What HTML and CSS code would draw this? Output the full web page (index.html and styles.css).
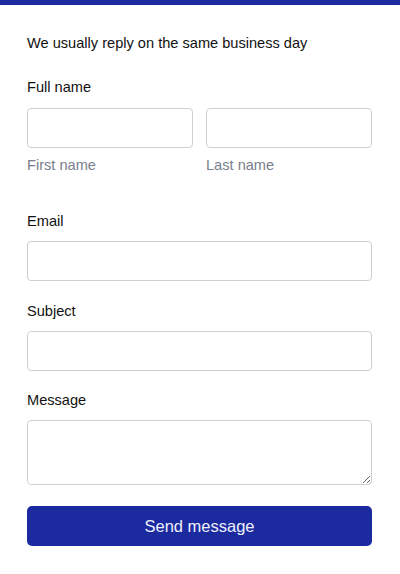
FILE: index.html
```html
<!DOCTYPE html>
<html>
<head>
<meta charset="utf-8">
<link rel="stylesheet" href="styles.css">
</head>
<body>
<div class="topbar"></div>
<form class="form">
  <p class="intro">We usually reply on the same business day</p>
  <div class="group name-group">
    <label class="label">Full name</label>
    <div class="name-row">
      <div class="name-col">
        <input class="input" type="text">
        <span class="hint">First name</span>
      </div>
      <div class="name-col">
        <input class="input" type="text">
        <span class="hint">Last name</span>
      </div>
    </div>
  </div>
  <div class="group">
    <label class="label">Email</label>
    <input class="input" type="email">
  </div>
  <div class="group subject-group">
    <label class="label">Subject</label>
    <input class="input" type="text">
  </div>
  <div class="group message-group">
    <label class="label">Message</label>
    <textarea class="textarea"></textarea>
  </div>
  <button class="button" type="button">Send message</button>
</form>
</body>
</html>
```
FILE: styles.css
```css
* { box-sizing: border-box; }
html, body { margin: 0; padding: 0; background: #fff; }
body {
  font-family: "Liberation Sans", Arial, sans-serif;
  font-size: 14.6px;
  color: #111;
}
.topbar { height: 5px; background: #1b2a9f; }
.form {
  display: flex;
  flex-direction: column;
  padding: 28px 28px 0 27px;
}
.intro { margin: 0 0 24px 0; line-height: 20px; }
.group { display: flex; flex-direction: column; margin-bottom: 20px; }
.name-group { margin-bottom: 36px; }
.label { line-height: 20px; margin-bottom: 10px; }
.name-group .label { margin-bottom: 11px; }
.subject-group { margin-bottom: 19px; }
.message-group { margin-bottom: 21px; }
.name-row { display: flex; gap: 13px; }
.name-col { flex: 1; display: flex; flex-direction: column; }
.hint { color: #787e8d; line-height: 20px; margin-top: 7px; }
.input, .textarea {
  width: 100%;
  height: 40px;
  border: 1px solid #cfd0d4;
  border-radius: 4px;
  background: #fff;
  font: inherit;
  padding: 0 10px;
  margin: 0;
  display: block;
}
.textarea { height: 65px; resize: vertical; padding: 8px 10px; }
.button {
  height: 40px;
  width: 100%;
  border: none;
  border-radius: 5px;
  background: #1b2a9f;
  color: #eef0fb;
  font-family: "Liberation Sans", Arial, sans-serif;
  font-size: 16.5px;
  cursor: pointer;
}
```
